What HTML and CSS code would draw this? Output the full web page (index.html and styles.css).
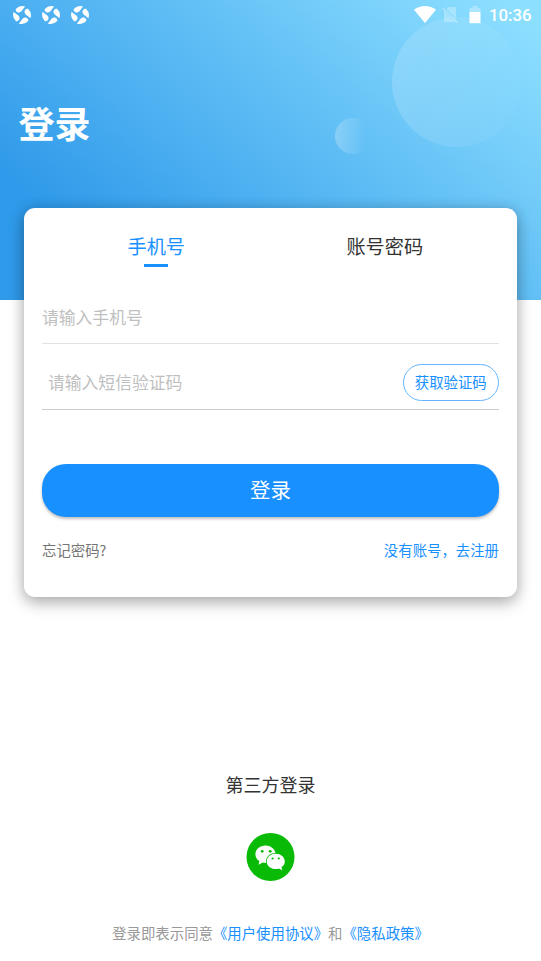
FILE: index.html
```
<!DOCTYPE html>
<html lang="zh-CN">
<head>
<meta charset="utf-8">
<meta name="viewport" content="width=device-width, initial-scale=1">
<title>登录</title>
<link rel="stylesheet" href="styles.css">
</head>
<body>
<svg class="symbols" aria-hidden="true">
  <symbol id="swirl" viewBox="0 0 18 18">
    <g fill="#fff">
      <path id="blade" d="M2.8 3A8.9 8.9 0 0 1 12.2.6C11 1.8 10.2 2.8 9.4 4C8.4 5.6 7 6.8 5.2 6.5C3.4 6.1 2.4 4.6 2.8 3Z"/>
      <use href="#blade" transform="rotate(90 9 9)"/>
      <use href="#blade" transform="rotate(180 9 9)"/>
      <use href="#blade" transform="rotate(270 9 9)"/>
    </g>
  </symbol>
</svg>
<main class="screen">
  <header class="hero">
    <div class="bubble bubble-large"></div>
    <div class="bubble bubble-small"></div>
    <div class="status">
      <div class="notices">
        <svg class="swirl"><use href="#swirl"/></svg>
        <svg class="swirl"><use href="#swirl"/></svg>
        <svg class="swirl"><use href="#swirl"/></svg>
      </div>
      <div class="system">
        <svg class="wifi" viewBox="0 0 22 17"><path fill="#fff" d="M0 3.8C6.4-1.2 15.6-1.2 22 3.8L11 17Z"/></svg>
        <svg class="sim" viewBox="0 0 16 17"><path fill="#fff" fill-opacity=".3" d="M5.8 1H13Q14 1 14 2V13L4.4 3Z M2 4.8L13 16H3Q2 16 2 15Z"/><path stroke="#fff" stroke-opacity=".4" stroke-width="1.3" d="M.7 2L15.4 16.7"/></svg>
        <svg class="battery" viewBox="0 0 12 18"><path fill="#fff" fill-opacity=".3" d="M3.5 0H8.5V2H11Q11.5 2 11.5 2.6V6H.5V2.6Q.5 2 1 2H3.5Z"/><path fill="#fff" d="M.5 6H11.5V17.2H.5Z"/></svg>
        <span class="clock">10:36</span>
      </div>
    </div>
    <h1 class="title">登录</h1>
  </header>

  <section class="card">
    <nav class="tabs">
      <a class="tab tab-active">手机号</a>
      <a class="tab">账号密码</a>
    </nav>
    <div class="field">请输入手机号</div>
    <div class="field field-code">
      <span>请输入短信验证码</span>
      <button class="code-button">获取验证码</button>
    </div>
    <button class="submit">登录</button>
    <div class="links">
      <a class="forgot">忘记密码?</a>
      <a class="register">没有账号，去注册</a>
    </div>
  </section>

  <footer class="third-party">
    <h2 class="third-title">第三方登录</h2>
    <svg class="wechat" viewBox="0 0 49 48">
      <circle cx="24.5" cy="24" r="24" fill="#09bb07"/>
      <path fill="#fff" d="M19.6 12.4C13.9 12.4 9.4 16.2 9.4 21.2C9.4 24 10.8 26.4 13.3 28L12.6 31.8L16.7 29.5Q18.2 29.9 20.1 29.9C19 24.8 23.4 20.1 29.6 20C28.5 15.6 24.5 12.4 19.6 12.4Z"/>
      <path fill="#fff" d="M29.7 20.8C24.7 20.8 20.7 24.2 20.7 28.4C20.7 32.7 24.7 36 29.7 36Q31.4 36 32.9 35.5L36.3 37.3L35.5 34.1C37.6 32.7 38.8 30.7 38.8 28.4C38.8 24.2 34.8 20.8 29.7 20.8Z"/>
      <g fill="#09bb07"><circle cx="16.2" cy="18.3" r="1.4"/><circle cx="24.2" cy="18.3" r="1.4"/><circle cx="26.6" cy="25.5" r="1.1"/><circle cx="32.8" cy="25.5" r="1.1"/></g>
    </svg>
    <p class="terms">登录即表示同意<a>《用户使用协议》</a>和<a>《隐私政策》</a></p>
  </footer>
</main>
</body>
</html>
```
FILE: styles.css
```
* {
  box-sizing: border-box;
}

body {
  margin: 0;
  background: #fff;
  font-family: "Noto Sans CJK SC", sans-serif;
}

button {
  padding: 0;
  font-family: inherit;
}

.symbols {
  position: absolute;
  width: 0;
  height: 0;
}

.screen {
  display: flex;
  flex-direction: column;
  width: 541px;
  height: 961px;
  overflow: hidden;
}

.hero {
  position: relative;
  flex: none;
  height: 300.3px;
  background: linear-gradient(40deg, #2f9aea 17%, #8ddfff 96%);
}

.bubble {
  position: absolute;
  border-radius: 50%;
}

.bubble-large {
  left: 391.5px;
  top: 17px;
  width: 130px;
  height: 130px;
  background: linear-gradient(90deg, rgba(255, 255, 255, .16), rgba(255, 255, 255, .02));
}

.bubble-small {
  left: 335px;
  top: 118px;
  width: 36px;
  height: 36px;
  background: linear-gradient(90deg, rgba(255, 255, 255, .25), rgba(255, 255, 255, 0) 84%);
}

.status {
  position: relative;
  display: flex;
  justify-content: space-between;
  height: 29px;
  padding: 0 9.5px 0 13px;
}

.notices,
.system {
  display: flex;
  align-items: center;
}

.notices {
  gap: 11px;
}

.swirl {
  width: 18px;
  height: 18px;
}

.wifi {
  width: 22px;
  height: 17px;
  margin-right: 6px;
}

.sim {
  width: 16px;
  height: 17px;
  margin-right: 11px;
}

.battery {
  width: 12px;
  height: 18px;
  margin-right: 8px;
}

.clock {
  color: #fff;
  font: 500 16.8px/30px Roboto, sans-serif;
}

.title {
  margin: 67px 0 0 18.5px;
  color: #fff;
  font-size: 36px;
  font-weight: 700;
  line-height: 52px;
}

.card {
  position: relative;
  flex: none;
  height: 388.2px;
  margin: -91.9px 24px 0;
  padding: 0 18px;
  border-radius: 11px;
  background: #fff;
  box-shadow: 0 6px 16px rgba(0, 0, 0, .28), 0 0 14px rgba(0, 0, 0, .12);
}

.tabs {
  display: grid;
  grid-template-columns: 1fr 1fr;
  height: 75.6px;
  padding-top: 24px;
}

.tab {
  display: flex;
  flex-direction: column;
  align-items: center;
  color: #333;
  font-size: 19.2px;
  line-height: 28px;
}

.tab-active {
  color: #1890ff;
}

.tab-active::after {
  content: "";
  width: 24px;
  height: 3px;
  margin-top: 3.6px;
  background: #1890ff;
}

.field {
  display: flex;
  align-items: center;
  height: 60px;
  padding-top: 7px;
  border-bottom: 1px solid #e2e2e2;
  color: #bfbfbf;
  font-size: 16.8px;
}

.field-code {
  justify-content: space-between;
  height: 66px;
  padding: 12px 0 0 6px;
  border-color: #ccc;
}

.field-code span {
  padding-bottom: 2px;
}

.code-button {
  width: 96.5px;
  height: 37px;
  padding-bottom: 2px;
  border: 1px solid #65b4ff;
  border-radius: 19px;
  background: #fff;
  color: #1890ff;
  font-size: 14.4px;
}

.submit {
  display: block;
  width: 100%;
  height: 53px;
  margin-top: 53.7px;
  padding-bottom: 2px;
  border: 0;
  border-radius: 24px;
  background: #1890ff;
  box-shadow: 0 2px 3px rgba(0, 0, 0, .25);
  color: #fff;
  font-size: 20.4px;
}

.links {
  display: flex;
  justify-content: space-between;
  margin-top: 22px;
  font-size: 14.4px;
  line-height: 22px;
}

.forgot {
  color: #757575;
}

.register {
  color: #1890ff;
}

.third-party {
  display: flex;
  flex-direction: column;
  align-items: center;
  padding-top: 174px;
}

.third-title {
  margin: 0 0 36px;
  color: #333;
  font-size: 18px;
  font-weight: 400;
  line-height: 26px;
}

.wechat {
  width: 49px;
  height: 48px;
}

.terms {
  margin: 41.5px 0 0;
  color: #999;
  font-size: 14.4px;
  line-height: 22px;
  white-space: nowrap;
}

.terms a {
  color: #1890ff;
}
```
